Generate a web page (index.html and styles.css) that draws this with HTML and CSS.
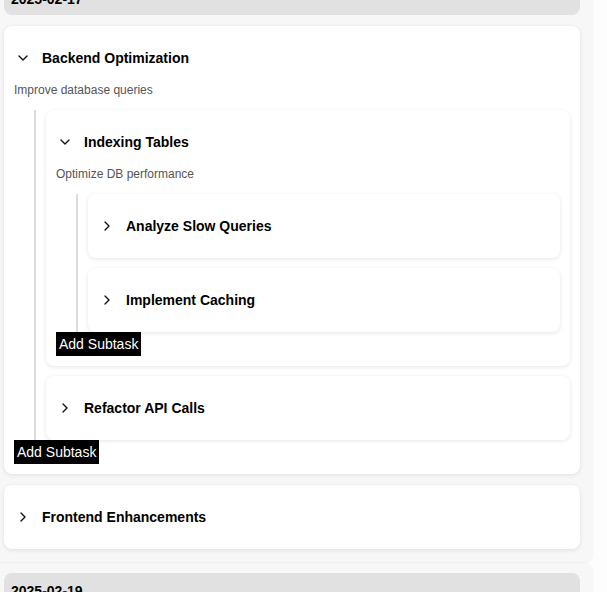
FILE: index.html
```html
<!DOCTYPE html>
<html lang="en">
<head>
<meta charset="utf-8">
<title>Tasks</title>
<link rel="stylesheet" href="styles.css">
</head>
<body>
<div class="page">
  <section class="group">
    <div class="date">2025-02-17</div>
    <div class="task">
      <div class="task-row">
        <svg class="chev" viewBox="0 0 24 24"><path d="M6 9l6 6 6-6"/></svg>
        <span class="title">Backend Optimization</span>
      </div>
      <p class="desc">Improve database queries</p>
      <div class="subtasks">
        <div class="task">
          <div class="task-row">
            <svg class="chev" viewBox="0 0 24 24"><path d="M6 9l6 6 6-6"/></svg>
            <span class="title">Indexing Tables</span>
          </div>
          <p class="desc">Optimize DB performance</p>
          <div class="subtasks">
            <div class="task">
              <div class="task-row">
                <svg class="chev" viewBox="0 0 24 24"><path d="M9 18l6-6-6-6"/></svg>
                <span class="title">Analyze Slow Queries</span>
              </div>
            </div>
            <div class="task">
              <div class="task-row">
                <svg class="chev" viewBox="0 0 24 24"><path d="M9 18l6-6-6-6"/></svg>
                <span class="title">Implement Caching</span>
              </div>
            </div>
          </div>
          <button class="add">Add Subtask</button>
        </div>
        <div class="task">
          <div class="task-row">
            <svg class="chev" viewBox="0 0 24 24"><path d="M9 18l6-6-6-6"/></svg>
            <span class="title">Refactor API Calls</span>
          </div>
        </div>
      </div>
      <button class="add">Add Subtask</button>
    </div>
    <div class="task">
      <div class="task-row">
        <svg class="chev" viewBox="0 0 24 24"><path d="M9 18l6-6-6-6"/></svg>
        <span class="title">Frontend Enhancements</span>
      </div>
    </div>
  </section>
  <section class="group">
    <div class="date">2025-02-19</div>
    <div class="task">
      <div class="task-row">
        <svg class="chev" viewBox="0 0 24 24"><path d="M9 18l6-6-6-6"/></svg>
        <span class="title">Design Review</span>
      </div>
    </div>
  </section>
</div>
</body>
</html>
```
FILE: styles.css
```css
html, body {
  margin: 0;
  padding: 0;
  background: #fdfdfd;
  font-family: "Liberation Sans", Arial, sans-serif;
  color: #000;
  overflow: hidden;
}

.page {
  width: 600px;
  margin: -29px 0 0 -8px;
}

.group {
  display: flex;
  flex-direction: column;
  gap: 11px;
  background: #f7f7f7;
  border-radius: 8px;
  padding: 10px 12px 13px;
  margin-bottom: 1px;
  box-shadow: 0 1px 3px rgba(0, 0, 0, 0.07);
}

.date {
  background: #e1e1e1;
  border-radius: 8px;
  padding: 10px 7px 7px;
  font-size: 14px;
  line-height: 17px;
  font-weight: bold;
}

.task {
  background: #fff;
  border-radius: 8px;
  padding: 10px;
  box-shadow: 0 1px 4px rgba(0, 0, 0, 0.1);
}

.task-row {
  display: flex;
  align-items: center;
  gap: 11px;
  padding: 13px 0 13px 1px;
}

.chev {
  width: 16px;
  height: 16px;
  flex: none;
  fill: none;
  stroke: #111;
  stroke-width: 2;
  stroke-linecap: round;
  stroke-linejoin: round;
}

.title {
  font-size: 14px;
  line-height: 18px;
  font-weight: bold;
}

.desc {
  margin: 2px 0 0;
  font-size: 12px;
  line-height: 16px;
  color: #555;
}

.subtasks {
  display: flex;
  flex-direction: column;
  gap: 10px;
  margin: 12px 0 0 20px;
  padding-left: 10px;
  border-left: 2px solid #ddd;
}

.add {
  display: block;
  border: 0;
  border-radius: 0;
  margin: 0;
  background: #000;
  color: #fff;
  font-family: "Liberation Sans", Arial, sans-serif;
  font-size: 14px;
  line-height: 18px;
  padding: 3px;
  cursor: pointer;
}
```
